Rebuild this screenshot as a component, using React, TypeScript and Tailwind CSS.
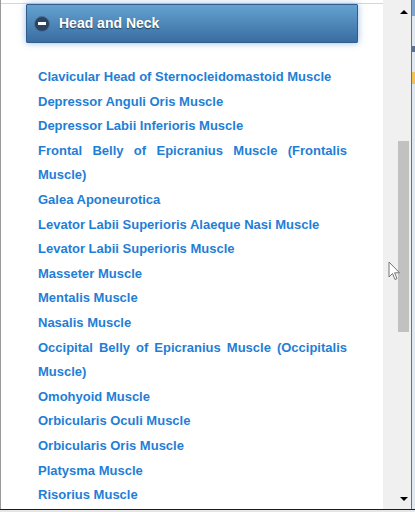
import React from "react";

const items = [
  "Clavicular Head of Sternocleidomastoid Muscle",
  "Depressor Anguli Oris Muscle",
  "Depressor Labii Inferioris Muscle",
  "Frontal Belly of Epicranius Muscle (Frontalis Muscle)",
  "Galea Aponeurotica",
  "Levator Labii Superioris Alaeque Nasi Muscle",
  "Levator Labii Superioris Muscle",
  "Masseter Muscle",
  "Mentalis Muscle",
  "Nasalis Muscle",
  "Occipital Belly of Epicranius Muscle (Occipitalis Muscle)",
  "Omohyoid Muscle",
  "Orbicularis Oculi Muscle",
  "Orbicularis Oris Muscle",
  "Platysma Muscle",
  "Risorius Muscle",
];

export default function App() {
  return (
    <div
      className="relative w-[415px] h-[512px] overflow-hidden bg-[#2a2a2a] flex flex-col"
      style={{ fontFamily: '"Liberation Sans", Arial, sans-serif' }}
    >
      <div className="flex h-[509px] bg-white">
        {/* left border */}
        <div className="w-px bg-[#9a9a9a]" />
        {/* main content */}
        <div className="relative w-[382px] flex flex-col overflow-hidden">
          <div className="h-[3px] bg-white shrink-0" />
          <div className="h-px bg-[#d6d6d6] shrink-0" />
          <div className="ml-[25px] w-[332px] h-[39px] shrink-0 flex items-center rounded-[1px] border border-[#2f5e8e] bg-gradient-to-b from-[#64a2d0] to-[#3a6da2] shadow-[0_0_7px_rgba(70,130,210,0.55)]">
            <div className="ml-[7px] w-4 h-4 rounded-full bg-[#2a4563] border border-[#4d6f93] flex items-center justify-center">
              <div className="w-2 h-[3px] bg-white" />
            </div>
            <span className="ml-[9px] text-white font-bold text-[14px] [text-shadow:0_1px_1px_rgba(0,0,0,0.55)]">
              Head and Neck
            </span>
          </div>
          <ul className="mt-[22px] ml-[37px] w-[309px] shrink-0">
            {items.map((t) => (
              <li
                key={t}
                className="text-[13px] leading-[24.6px] font-bold text-[#1f7ed6] text-justify"
              >
                {t}
              </li>
            ))}
          </ul>
        </div>
        {/* scrollbar */}
        <div className="relative w-[28px] bg-[#f0f0f0] flex flex-col items-end pr-[2px]">
          <div className="w-[11px] h-[24px] flex items-center justify-center">
            <div className="w-0 h-0 border-l-[4px] border-r-[4px] border-b-[4px] border-l-transparent border-r-transparent border-b-black" />
          </div>
          <div className="mt-[117px] w-[11px] h-[191px] bg-[#c1c1c1]" />
          <div className="flex-1" />
          <div className="w-[11px] h-[20px] flex items-center justify-center">
            <div className="w-0 h-0 border-l-[4px] border-r-[4px] border-t-[4px] border-l-transparent border-r-transparent border-t-black" />
          </div>
        </div>
        {/* right border */}
        <div className="w-px bg-[#6b7079]" />
        <div className="w-[3px] bg-[#dfe7f0] flex flex-col">
          <div className="h-[16px] bg-[#7fa6cf]" />
          <div className="h-[30px]" />
          <div className="h-[6px] bg-[#5b6f99]" />
          <div className="h-[20px]" />
          <div className="h-[12px] bg-[#f2c15a]" />
        </div>
      </div>
      <div className="h-px bg-[#1c1c1c]" />
      <div className="flex-1 bg-[#e6e6e6]" />
      {/* mouse cursor */}
      <svg
        className="absolute left-[388px] top-[261px]"
        width="13"
        height="21"
        viewBox="0 0 13 21"
      >
        <path
          d="M1 1 L1 16 L4.5 12.5 L7 18.5 L9 17.6 L6.6 11.8 L11.5 11.8 Z"
          fill="#ffffff"
          stroke="#777"
          strokeWidth="1"
          strokeLinejoin="round"
        />
      </svg>
    </div>
  );
}
